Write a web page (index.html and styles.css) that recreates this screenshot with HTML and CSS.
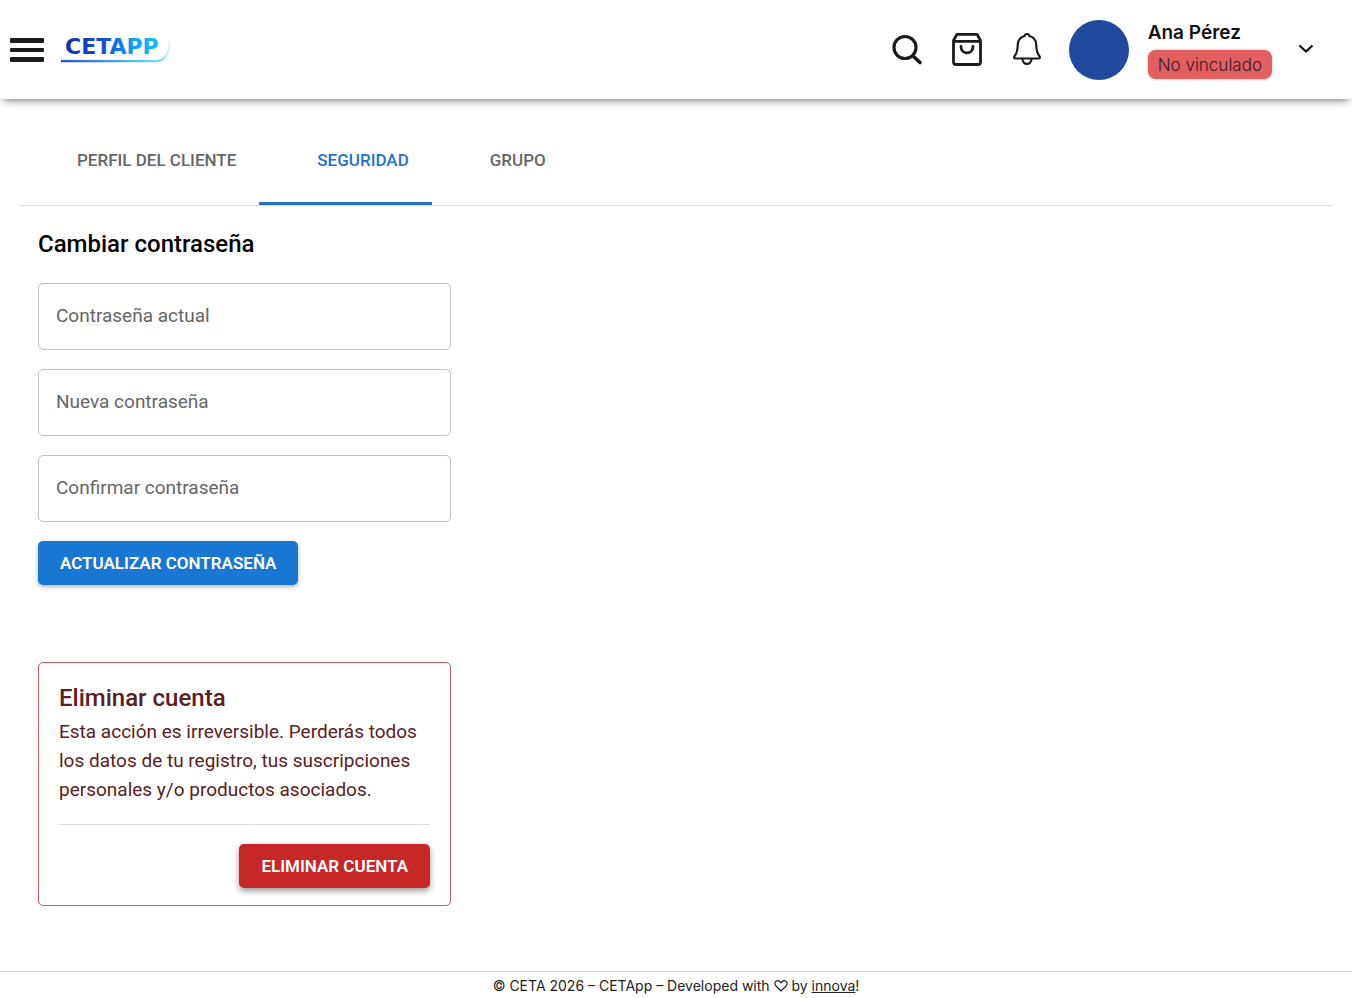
FILE: index.html
```html
<!DOCTYPE html>
<html lang="es">
<head>
<meta charset="utf-8">
<meta name="viewport" content="width=device-width, initial-scale=1">
<title>CETApp</title>
<link rel="stylesheet" href="styles.css">
</head>
<body>
<header class="topbar">
  <button class="icon-button menu" type="button" aria-label="Menú">
    <svg width="34" height="26" viewBox="0 0 34 26"><g fill="#1c1c1c"><rect y="1" width="34" height="5" rx="1"/><rect y="11" width="34" height="4" rx="1"/><rect y="20" width="34" height="5" rx="1"/></g></svg>
  </button>
  <a class="brand" href="#" aria-label="CETApp">
    <svg width="112" height="32" viewBox="0 0 112 32">
      <defs>
        <linearGradient id="ink" gradientUnits="userSpaceOnUse" x1="0" y1="0" x2="106" y2="0"><stop offset="0" stop-color="#1427a5"/><stop offset=".4" stop-color="#1450cf"/><stop offset=".7" stop-color="#12a4f4"/><stop offset="1" stop-color="#10c4fa"/></linearGradient>
        <linearGradient id="line" gradientUnits="userSpaceOnUse" x1="0" y1="0" x2="110" y2="0"><stop offset="0" stop-color="#1732ae"/><stop offset=".55" stop-color="#2aa5ea"/><stop offset=".9" stop-color="#6bd3f8"/><stop offset="1" stop-color="#e4f7fd"/></linearGradient>
      </defs>
      <text class="wordmark" x="4" y="20" fill="url(#ink)">CETAPP</text>
      <path d="M0 26.400H95C103 26 108 21 108.500 5C109 21 104 27.600 96 27.800H0z" fill="url(#line)" stroke="url(#line)" stroke-width=".8"/>
    </svg>
  </a>
  <div class="actions">
    <button class="icon-button" type="button" aria-label="Buscar">
      <svg width="36" height="36" viewBox="0 1 36 36" fill="none" stroke="#1c1c1c"><circle cx="16" cy="16.500" r="11" stroke-width="3.200"/><path d="M24 25l7 6.500" stroke-width="3.600" stroke-linecap="round"/></svg>
    </button>
    <button class="icon-button" type="button" aria-label="Carrito">
      <svg width="36" height="36" viewBox="0 1 36 36" fill="none" stroke="#1c1c1c" stroke-width="2.800" stroke-linecap="round" stroke-linejoin="round"><path d="M4.500 9.500L8 3.300H28L31.500 9.500V31Q31.500 33.500 29 33.500H7Q4.500 33.500 4.500 31zM5 10.300H31M12 15.500C12 24 24 24 24 15.500"/></svg>
    </button>
    <button class="icon-button" type="button" aria-label="Notificaciones">
      <svg width="36" height="36" viewBox="0 1 36 36" fill="none" stroke="#1c1c1c" stroke-width="2.200" stroke-linecap="round" stroke-linejoin="round"><path d="M18 3C16.500 3 15.800 4 15.700 5C11.500 6 9 9 8.800 13.500C8.600 19 8 22 6 24.500C4.500 26.500 5 27.500 6.500 27.500H29.500C31 27.500 31.500 26.500 30 24.500C28 22 27.400 19 27.200 13.500C27 9 24.500 6 20.300 5C20.200 4 19.500 3 18 3zM13.500 28C13.500 34.500 22.500 34.500 22.500 28"/></svg>
    </button>
    <span class="avatar"></span>
    <div class="user">
      <span class="user-name">Ana Pérez</span>
      <span class="badge">No vinculado</span>
    </div>
    <button class="icon-button chevron" type="button" aria-label="Opciones de usuario">
      <svg width="16" height="16" viewBox="0 1 16 16" fill="none" stroke="#111" stroke-width="2.200"><path d="M1.500 4.500L8 10.500L14.500 4.500"/></svg>
    </button>
  </div>
</header>
<main class="page">
  <div class="tabs" role="tablist">
    <button class="tab" type="button" role="tab" aria-selected="false">PERFIL DEL CLIENTE</button>
    <button class="tab tab-active" type="button" role="tab" aria-selected="true">SEGURIDAD</button>
    <button class="tab" type="button" role="tab" aria-selected="false">GRUPO</button>
  </div>
  <div class="panel" role="tabpanel">
    <form class="password-form">
      <h2 class="title">Cambiar contraseña</h2>
      <div class="field"><input class="input" id="current" type="password"><label class="label" for="current">Contraseña actual</label></div>
      <div class="field"><input class="input" id="new" type="password"><label class="label" for="new">Nueva contraseña</label></div>
      <div class="field"><input class="input" id="confirm" type="password"><label class="label" for="confirm">Confirmar contraseña</label></div>
      <button class="button" type="button">ACTUALIZAR CONTRASEÑA</button>
    </form>
    <section class="danger">
      <h2 class="title danger-title">Eliminar cuenta</h2>
      <p class="danger-text">Esta acción es irreversible. Perderás todos los datos de tu registro, tus suscripciones personales y/o productos asociados.</p>
      <div class="danger-actions"><button class="button button-danger" type="button">ELIMINAR CUENTA</button></div>
    </section>
  </div>
</main>
<footer class="footer">© CETA 2026 – CETApp – Developed with
  <svg class="heart" width="14" height="12" viewBox="0 0 14 12" fill="none" stroke="#222" stroke-width="1.200"><path d="M7 11L2 6C-1.500 2 4 -1.500 7 2.800C10 -1.500 15.500 2 12 6z"/></svg>
  by <a class="link" href="#">innova</a>!</footer>
</body>
</html>
```
FILE: styles.css
```css
* { box-sizing: border-box; }
body {
  margin: 0;
  min-height: 100vh;
  display: flex;
  flex-direction: column;
  background: #fff;
  color: #000;
  font-family: Roboto, "Liberation Sans", sans-serif;
}
button { font: inherit; border: 0; cursor: pointer; }
svg { display: block; }

.topbar {
  display: flex;
  align-items: center;
  height: 99px;
  padding: 0 38px 0 10px;
  background: #fff;
  box-shadow: 0 6px 8px -4px rgba(0, 0, 0, .4), 0 2px 4px -1px rgba(0, 0, 0, .15);
}
.icon-button { display: flex; padding: 0; background: none; }
.brand { margin-left: 17px; }
.wordmark { font: 700 22px "DejaVu Sans", sans-serif; }
.actions { display: flex; align-items: center; gap: 24px; margin-left: auto; }
.avatar { width: 60px; height: 60px; border-radius: 50%; background: #20489c; }
.user {
  display: flex;
  flex-direction: column;
  align-items: flex-start;
  gap: 4px;
  margin: 0 2px 0 -5px;
  font-family: Inter, sans-serif;
  color: #111;
}
.user-name { font-size: 19px; line-height: 26px; font-weight: 600; }
.badge {
  padding: 2px 10px 0;
  border-radius: 8px;
  background: #e25f60;
  box-shadow: 0 0 3px rgba(0, 0, 0, .3);
  color: #3a1a26;
  font-size: 17px;
  line-height: 27px;
  font-weight: 300;
}

.page { flex: 1; padding: 19px 19px 0; }
.tabs { display: flex; height: 88px; border-bottom: 1px solid #ddd; }
.tab {
  padding: 0 23px 0 58px;
  background: none;
  border-bottom: 3px solid transparent;
  color: #666;
  font-size: 17px;
  font-weight: 500;
}
.tab-active { color: #1f73c7; border-bottom-color: #2672c4; }

.panel { width: 451px; max-width: 100%; padding: 19px; }
.title { margin: 0; font-size: 24px; line-height: 39px; font-weight: 500; }
.password-form { display: flex; flex-direction: column; align-items: flex-start; gap: 19px; }
.field { position: relative; width: 100%; }
.input {
  display: block;
  width: 100%;
  height: 67px;
  padding: 0 17px;
  border: 1px solid #bfbfbf;
  border-radius: 5px;
  background: #fff;
  font-size: 19px;
}
.label {
  position: absolute;
  inset: 0 18px;
  color: #666;
  font-size: 19px;
  line-height: 65px;
  pointer-events: none;
}
.button {
  padding: 0 22px;
  border-radius: 5px;
  background: #1976d2;
  box-shadow: 0 2px 4px rgba(0, 0, 0, .3);
  color: #fff;
  font-size: 17px;
  line-height: 44px;
  font-weight: 600;
}
.danger {
  margin-top: 77px;
  padding: 17px 20px;
  border: 1px solid #d05a5f;
  border-radius: 5px;
  color: #5a2022;
}
.danger-title { line-height: 37px; }
.danger-text { margin: 0 0 20px; font-size: 19px; line-height: 29px; }
.danger-actions { display: flex; justify-content: flex-end; padding-top: 19px; border-top: 1px solid #ddd; }
.button-danger { background: #c62828; box-shadow: 0 3px 6px rgba(0, 0, 0, .4); }

.footer {
  height: 27px;
  border-top: 1px solid #d5d5d5;
  color: #222;
  font-family: Inter, sans-serif;
  font-size: 14px;
  line-height: 28px;
  text-align: center;
}
.heart { display: inline-block; vertical-align: -1px; }
.link { color: inherit; }
```
